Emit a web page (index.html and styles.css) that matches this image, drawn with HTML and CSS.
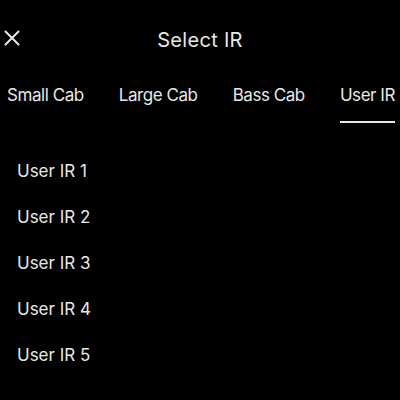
FILE: index.html
```html
<!DOCTYPE html>
<html>
<head>
<meta charset="utf-8">
<link rel="stylesheet" href="styles.css">
</head>
<body>
<div class="screen">
  <header class="header">
    <button class="close" aria-label="Close">
      <svg width="16" height="16" viewBox="0 0 16 16"><path d="M1.5 1.5 L14.5 14.5 M14.5 1.5 L1.5 14.5" stroke="#e8e8e8" stroke-width="2" stroke-linecap="round"/></svg>
    </button>
    <h1 class="title">Select IR</h1>
  </header>
  <nav class="tabs">
    <div class="tab"><span class="tab-label">Small Cab</span></div>
    <div class="tab"><span class="tab-label">Large Cab</span></div>
    <div class="tab"><span class="tab-label">Bass Cab</span></div>
    <div class="tab active"><span class="tab-label">User IR</span><span class="bar"></span></div>
  </nav>
  <ul class="list">
    <li class="item">User IR 1</li>
    <li class="item">User IR 2</li>
    <li class="item">User IR 3</li>
    <li class="item">User IR 4</li>
    <li class="item">User IR 5</li>
  </ul>
</div>
</body>
</html>
```

FILE: styles.css
```css
* { box-sizing: border-box; }
html, body {
  margin: 0;
  padding: 0;
  background: #000;
}
.screen {
  width: 400px;
  height: 400px;
  background: #000;
  color: #e8e8e8;
  font-family: Inter, "Liberation Sans", sans-serif;
  overflow: hidden;
}
.header {
  position: relative;
  height: 80px;
  display: flex;
  align-items: center;
  justify-content: center;
}
.close {
  position: absolute;
  left: 4px;
  top: 30px;
  width: 16px;
  height: 16px;
  padding: 0;
  border: 0;
  background: none;
  display: block;
}
.close svg { display: block; }
.title {
  margin: 0;
  font-size: 20px;
  line-height: 24px;
  font-weight: 400;
  letter-spacing: 0.3px;
}
.tabs {
  display: flex;
  justify-content: space-between;
  padding: 0 5px 0 7px;
}
.tab {
  display: flex;
  flex-direction: column;
  padding-top: 5px;
}
.tab-label {
  font-size: 17px;
  line-height: 20px;
  letter-spacing: -0.45px;
  white-space: nowrap;
}
.bar {
  display: block;
  height: 2px;
  margin-top: 16px;
  background: #e8e8e8;
}
.list {
  list-style: none;
  margin: 25px 0 0;
  padding: 0 0 0 17px;
}
.item {
  font-size: 17px;
  line-height: 46px;
}
```
